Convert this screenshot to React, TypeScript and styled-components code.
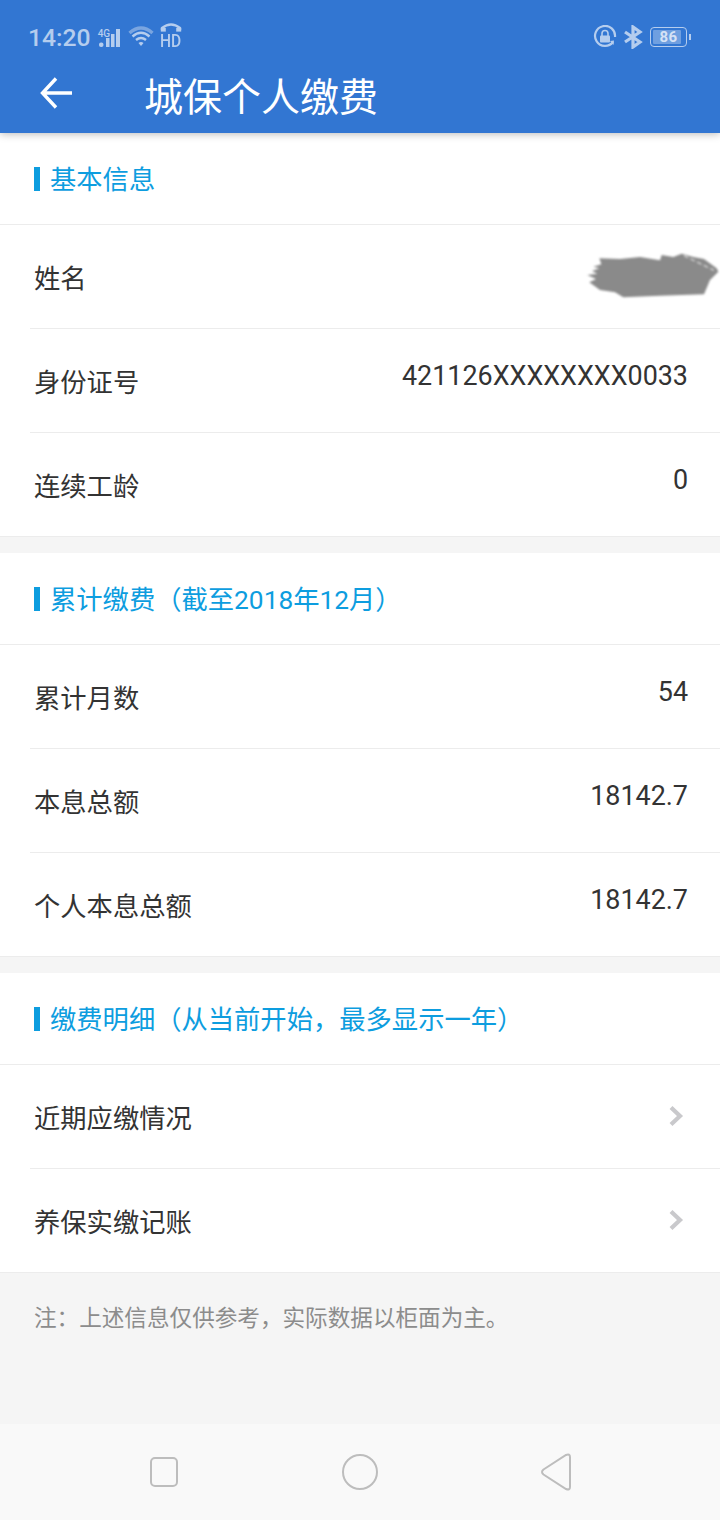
import React from "react";
import styled, { createGlobalStyle } from "styled-components";

const Global = createGlobalStyle`
  html, body { margin: 0; padding: 0; background: #f5f5f5; }
  body { font-family: Roboto, "Noto Sans CJK SC", sans-serif; }
`;
const Page = styled.div`
  width: 720px; height: 1520px; display: flex; flex-direction: column; overflow: hidden; background: #f5f5f5;
`;
const Header = styled.header`
  height: 133px; flex: none; background: #3276d2; box-shadow: 0 1px 8px rgba(0,0,0,.28);
  position: relative; z-index: 1; display: flex; flex-direction: column;
`;
const StatusBar = styled.div`
  height: 70px; padding: 22px 33px 0 28px; box-sizing: border-box; display: flex; justify-content: space-between; align-items: flex-start;
  color: #b5cdee;
`;
const StatusGroup = styled.div`
  display: flex; align-items: center; height: 30px;
`;
const Clock = styled.span`
  font: 500 24.7px/32px Roboto, sans-serif; color: #b5cdee; margin-right: 6px; position: relative; top: 1px;
`;
const SignalWrap = styled.div`
  position: relative; width: 24px; height: 24px; margin-right: 7px;
`;
const FourG = styled.span`
  position: absolute; left: 1px; top: 3px; font: 500 10px/11px Roboto, sans-serif; color: #b5cdee; letter-spacing: 0;
`;
const Hd = styled.div`
  position: relative; width: 22px; height: 30px; margin-left: 6px;
`;
const HdText = styled.span`
  position: absolute; left: 0; top: 9px; font: 500 19px/20px Roboto, sans-serif; color: #b5cdee; transform: scaleX(.82); transform-origin: left;
`;
const Battery = styled.div`
  position: relative; width: 37px; height: 20px; box-sizing: border-box; border: 1px solid #b5cdee; border-radius: 4px; margin-left: 7px; padding: 2px;
`;
const BatteryFill = styled.div`
  width: 28px; height: 100%; background: #6f9fe0; border-radius: 1px;
`;
const BatteryText = styled.span`
  position: absolute; left: 0; right: 0; top: 0; text-align: center;
  font: 700 15px/18px Roboto, sans-serif; color: #d5e2f5; letter-spacing: .5px;
`;
const BatteryTip = styled.span`
  position: absolute; right: -5px; top: 6px; width: 2px; height: 6px; background: #b5cdee;
`;
const TitleBar = styled.div`
  display: flex; align-items: center; height: 48px; padding-left: 38px;
`;
const Title = styled.h1`
  margin: 0 0 0 72px; font: 400 39px/48px "Noto Sans CJK SC", sans-serif; color: #fff; letter-spacing: 0;
`;
const Section = styled.section`
  background: #fff; flex: none; margin-bottom: 16px;
  border-bottom: 1px solid #ececec; &:last-of-type { margin-bottom: 0; }
`;
const SectionHead = styled.div`
  height: 92px; box-sizing: border-box; border-bottom: 1px solid #ececec; display: flex; align-items: center; padding: 2px 0 0 34px;
`;
const Mark = styled.span`
  width: 6px; height: 24px; background: #0d9ddf; margin-right: 10px; margin-bottom: 2px;
`;
const SectionTitle = styled.h2`
  margin: 0; font: 400 26.3px/32px Roboto, "Noto Sans CJK SC", sans-serif; color: #0d9ddf;
`;
const Row = styled.div`
  height: 104px; box-sizing: border-box; margin-left: 30px; padding: 0 32px 0 4px; border-bottom: 1px solid #ececec;
  display: flex; align-items: center; justify-content: space-between;
  &:last-child { border-bottom: none; height: 103px; }
`;
const MaskedRow = styled(Row)`
  padding-right: 0;
`;
const Label = styled.span`
  font: 400 26.3px/32px Roboto, "Noto Sans CJK SC", sans-serif; color: #333; position: relative; top: 2px;
`;
const Value = styled.span`
  font: 400 26.9px/32px Roboto, sans-serif; color: #333; position: relative; top: -5px;
`;
const Note = styled.p`
  margin: 0; flex: 1; padding: 31px 0 0 34px; font: 400 22.6px/30px Roboto, "Noto Sans CJK SC", sans-serif; color: #8c8c8c;
`;
const NavBar = styled.nav`
  height: 96px; flex: none; background: #f9f9f9; display: flex; align-items: center; justify-content: center;
`;
const NavSlot = styled.div`
  width: 196px; display: flex; justify-content: center;
`;
const Smudge = styled.svg`
  display: block; margin-bottom: 4px; filter: blur(.8px);
`;
const ChevronIcon = styled.svg`
  display: block; margin-right: 4px; position: relative; top: -1px;
`;

function Chevron() {
  return (
    <ChevronIcon width="16" height="24" viewBox="0 0 16 24">
      <path d="M3 3.5 L12 12 L3 20.5" fill="none" stroke="#c9c9cc" strokeWidth="4.2" />
    </ChevronIcon>
  );
}

const App: React.FC = () => (
  <Page>
    <Global />
    <Header>
      <StatusBar>
        <StatusGroup>
          <Clock>14:20</Clock>
          <SignalWrap>
            <FourG>4G</FourG>
            <svg width="24" height="24" viewBox="0 0 24 24">
              <g fill="#b5cdee">
                <rect x="2" y="17.5" width="4.5" height="4.5" rx="2" />
                <rect x="9" y="13" width="3.5" height="9" />
                <rect x="14" y="9" width="3.5" height="13" />
                <rect x="19" y="4" width="4" height="18" />
              </g>
            </svg>
          </SignalWrap>
          <svg width="26" height="22" viewBox="0 0 26 22">
            <g fill="none" strokeLinecap="butt">
              <path d="M1.5 7 Q13 -3 24.5 7" stroke="#7aa5e0" strokeWidth="3.4" />
              <path d="M4.5 10.5 Q13 3 21.5 10.5" stroke="#b5cdee" strokeWidth="2.4" />
              <path d="M8 14 Q13 10 18 14" stroke="#b5cdee" strokeWidth="2.4" />
            </g>
            <path d="M10.5 17 Q13 15 15.5 17 L13 20 Z" fill="#b5cdee" />
          </svg>
          <Hd>
            <svg width="22" height="12" viewBox="0 0 22 12" style={{ position: "absolute", left: 0, top: 0 }}>
              <path d="M2 8 V6 Q11 -1 20 6 V8" fill="none" stroke="#b5cdee" strokeWidth="2.4" />
              <rect x="0.8" y="6" width="5" height="3.6" fill="#b5cdee" />
              <rect x="16.2" y="6" width="5" height="3.6" fill="#b5cdee" />
            </svg>
            <HdText>HD</HdText>
          </Hd>
        </StatusGroup>
        <StatusGroup>
          <svg width="24" height="24" viewBox="0 0 24 24">
            <path d="M20 17 A10 10 0 1 1 22 12" fill="none" stroke="#b5cdee" strokeWidth="2.2" />
            <path d="M17 16 L21 15.5 L20.5 20 Z" fill="#b5cdee" />
            <rect x="7" y="10.5" width="10" height="7" rx="1" fill="#b5cdee" />
            <path d="M9 11 V8.5 A3 3 0 0 1 15 8.5 V11" fill="none" stroke="#b5cdee" strokeWidth="1.6" />
          </svg>
          <svg width="20" height="24" viewBox="0 0 20 24" style={{ marginLeft: 6 }}>
            <path d="M2 7 L17 17 L10 22 V2 L17 7 L2 17" fill="none" stroke="#b5cdee" strokeWidth="3.2" />
          </svg>
          <Battery>
            <BatteryFill />
            <BatteryText>86</BatteryText>
            <BatteryTip />
          </Battery>
        </StatusGroup>
      </StatusBar>
      <TitleBar>
        <svg width="34" height="34" viewBox="0 0 34 34">
          <path d="M18 1.5 L4.5 16 L18 30.5 M4.5 16 H34" fill="none" stroke="#fff" strokeWidth="3.4" />
        </svg>
        <Title>城保个人缴费</Title>
      </TitleBar>
    </Header>

    <Section>
      <SectionHead><Mark /><SectionTitle>基本信息</SectionTitle></SectionHead>
      <MaskedRow>
        <Label>姓名</Label>
        <Smudge width="160" height="80" viewBox="0 0 480 240">
          <path d="M82 120 L112 116 L96 108 L118 100 L100 95 L124 88 L118 70 L180 72 L240 66 L300 76 L305 60 L340 66 L365 56 L400 66 L432 72 L470 100 L475 110 L450 135 L432 178 L300 182 L190 187 L165 172 L120 165 L88 142 L108 132 Z" fill="#8a8a8a" />
          <path d="M372 62 L462 106" fill="none" stroke="#fff" strokeWidth="3" strokeDasharray="14 8" />
        </Smudge>
      </MaskedRow>
      <Row><Label>身份证号</Label><Value>421126XXXXXXXX0033</Value></Row>
      <Row><Label>连续工龄</Label><Value>0</Value></Row>
    </Section>

    <Section>
      <SectionHead><Mark /><SectionTitle>累计缴费（截至2018年12月）</SectionTitle></SectionHead>
      <Row><Label>累计月数</Label><Value>54</Value></Row>
      <Row><Label>本息总额</Label><Value>18142.7</Value></Row>
      <Row><Label>个人本息总额</Label><Value>18142.7</Value></Row>
    </Section>

    <Section>
      <SectionHead><Mark /><SectionTitle>缴费明细（从当前开始，最多显示一年）</SectionTitle></SectionHead>
      <Row><Label>近期应缴情况</Label><Chevron /></Row>
      <Row><Label>养保实缴记账</Label><Chevron /></Row>
    </Section>

    <Note>注：上述信息仅供参考，实际数据以柜面为主。</Note>

    <NavBar>
      <NavSlot>
        <svg width="32" height="32" viewBox="0 0 32 32">
          <rect x="3" y="2" width="26" height="28" rx="4" fill="none" stroke="#bdbdbd" strokeWidth="2" />
        </svg>
      </NavSlot>
      <NavSlot>
        <svg width="38" height="38" viewBox="0 0 38 38">
          <circle cx="19" cy="19" r="17" fill="none" stroke="#bdbdbd" strokeWidth="2" />
        </svg>
      </NavSlot>
      <NavSlot>
        <svg width="32" height="38" viewBox="0 0 32 38" style={{ position: "relative", left: 1 }}>
          <path d="M2.5 16.5 L25 2 Q29 0.5 29 4 V34 Q29 37.5 25 36 L2.5 21.5 Q-0.5 19 2.5 16.5 Z" fill="none" stroke="#bdbdbd" strokeWidth="2" />
        </svg>
      </NavSlot>
    </NavBar>
  </Page>
);

export default App;
